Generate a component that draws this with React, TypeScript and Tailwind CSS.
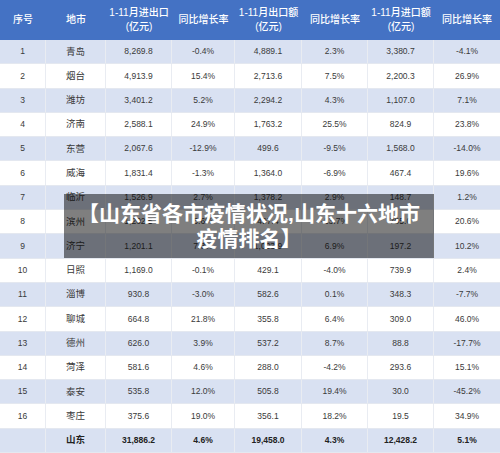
const rows = [
  ["1", "青岛", "8,269.8", "-0.4%", "4,889.1", "2.3%", "3,380.7", "-4.1%"],
  ["2", "烟台", "4,913.9", "15.4%", "2,713.6", "7.5%", "2,200.3", "26.9%"],
  ["3", "潍坊", "3,401.2", "5.2%", "2,294.2", "4.3%", "1,107.0", "7.1%"],
  ["4", "济南", "2,588.1", "24.9%", "1,763.2", "25.5%", "824.9", "23.8%"],
  ["5", "东营", "2,067.6", "-12.9%", "499.6", "-9.5%", "1,568.0", "-14.0%"],
  ["6", "威海", "1,831.4", "-1.3%", "1,364.0", "-6.9%", "467.4", "19.6%"],
  ["7", "临沂", "1,526.9", "2.7%", "1,378.2", "2.9%", "148.7", "1.2%"],
  ["8", "滨州", "1,202.5", "3.6%", "497.4", "-13.7%", "705.0", "20.6%"],
  ["9", "济宁", "1,201.1", "7.3%", "1,003.9", "6.9%", "197.2", "10.2%"],
  ["10", "日照", "1,169.0", "-0.1%", "429.1", "-4.0%", "739.9", "2.4%"],
  ["11", "淄博", "930.8", "-3.0%", "582.6", "0.1%", "348.3", "-7.7%"],
  ["12", "聊城", "664.8", "21.8%", "355.8", "6.4%", "309.0", "46.0%"],
  ["13", "德州", "626.0", "3.9%", "537.2", "8.7%", "88.8", "-17.7%"],
  ["14", "菏泽", "581.6", "4.6%", "288.0", "-4.2%", "293.6", "15.1%"],
  ["15", "泰安", "535.8", "12.0%", "505.8", "19.4%", "30.0", "-45.2%"],
  ["16", "枣庄", "375.6", "19.0%", "356.1", "18.2%", "19.5", "34.9%"],
];

const total = ["", "山东", "31,886.2", "4.6%", "19,458.0", "4.3%", "12,428.2", "5.1%"];

const widths = ["w-[46px]", "w-[60px]", "w-[66px]", "w-[63px]", "w-[67px]", "w-[66px]", "w-[66px]", "w-[66px]"];

const headers: [string, string?][] = [
  ["序号"],
  ["地市"],
  ["1-11月进出口", "(亿元)"],
  ["同比增长率"],
  ["1-11月出口额", "(亿元)"],
  ["同比增长率"],
  ["1-11月进口额", "(亿元)"],
  ["同比增长率"],
];

const font = { fontFamily: '"Liberation Sans", "Noto Sans CJK SC", sans-serif' };

function Row({ cells, shaded, bold }: { cells: string[]; shaded: boolean; bold?: boolean }) {
  return (
    <div className={`flex h-[24.3px] border-b border-[#e4e8f0] ${shaded ? "bg-[#d9e1f2]" : "bg-white"}`}>
      {cells.map((c, i) => (
        <div
          key={i}
          className={`${widths[i]} flex shrink-0 items-center justify-center border-r border-[#e9ecf2] last:border-r-0 ${
            i === 1 ? "text-[9.5px]" : "text-[8.5px]"
          } ${bold ? "font-bold text-[#222]" : "text-[#3a3a3a]"}`}
        >
          {c}
        </div>
      ))}
    </div>
  );
}

export default function App() {
  return (
    <div className="relative h-[453px] w-[500px] overflow-hidden bg-white" style={font}>
      <div className="flex h-[40px] bg-[#4472c4] text-white">
        {headers.map(([a, b], i) => (
          <div
            key={i}
            className={`${widths[i]} flex shrink-0 flex-col items-center justify-center text-[10px] leading-[14px] font-medium`}
          >
            <span>{a}</span>
            {b && <span>{b}</span>}
          </div>
        ))}
      </div>

      {rows.map((r, i) => (
        <Row key={r[0]} cells={r} shaded={i % 2 === 0} />
      ))}
      <Row cells={total} shaded bold />

      <div className="absolute left-[64px] top-[194px] flex h-[64px] w-[370px] flex-col items-center justify-center bg-black/50 text-[21px] font-bold leading-[25px] text-white">
        <span>【山东省各市疫情状况,山东十六地市</span>
        <span>疫情排名】</span>
      </div>
    </div>
  );
}
